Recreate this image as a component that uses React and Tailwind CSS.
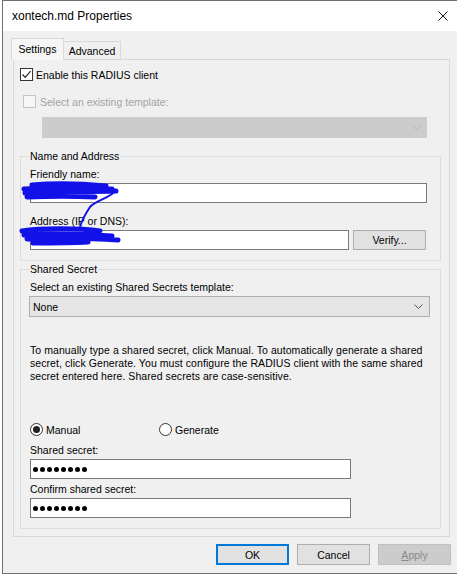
import React from 'react';

const CheckMark = () => (
  <svg width="11" height="11" viewBox="0 0 11 11">
    <path d="M1.5 5.5 L4.2 8.3 L9.6 2.2" fill="none" stroke="#222" strokeWidth="1.2" />
  </svg>
);

const Chevron = ({ color }) => (
  <svg width="9" height="5" viewBox="0 0 9 5">
    <path d="M0.5 0.5 L4.5 4.5 L8.5 0.5" fill="none" stroke={color} strokeWidth="1" />
  </svg>
);

const Radio = ({ checked }) => (
  <span className="w-[13px] h-[13px] rounded-full border border-[#333333] bg-white flex items-center justify-center shrink-0">
    {checked && <span className="w-[7px] h-[7px] rounded-full bg-[#222222]" />}
  </span>
);

const Dots = () => (
  <div className="flex items-center gap-[2px] pl-[2px] h-full">
    {Array.from({ length: 8 }).map((_, i) => (
      <span key={i} className="w-[5px] h-[5px] rounded-full bg-black" />
    ))}
  </div>
);

export default function App() {
  return (
    <div className="relative w-[457px] h-[577px] overflow-hidden bg-white text-black font-['Liberation_Sans',Arial,sans-serif]">
      <div className="ml-[2px] w-[455px] h-[574px] border border-r-0 border-[#707070] flex flex-col">
        {/* Title bar */}
        <div className="h-[30px] shrink-0 bg-white flex items-center justify-between pl-[9px] pr-[9px] text-[12px]">
          <span>xontech.md Properties</span>
          <svg width="10" height="10" viewBox="0 0 10 10">
            <path d="M0.5 0.5 L9.5 9.5 M9.5 0.5 L0.5 9.5" stroke="#111" strokeWidth="1" />
          </svg>
        </div>

        {/* Body */}
        <div className="flex-1 bg-[#f0f0f0] pt-[7px] text-[10.5px] leading-[14px]">
          {/* Tabs */}
          <div className="flex items-end ml-[8px] h-[21px]">
            <div className="relative z-10 -mb-px w-[53px] h-[22px] bg-[#f5f5f5] border border-b-0 border-[#d9d9d9] flex items-center justify-center pb-[1px]">
              Settings
            </div>
            <div className="w-[57px] h-[18px] bg-[#f0f0f0] border border-l-0 border-b-0 border-[#d9d9d9] flex items-center justify-center">
              Advanced
            </div>
          </div>

          {/* Panel */}
          <div className="ml-[10px] w-[437px] h-[478px] border border-[#d9d9d9] bg-[#f0f0f0] flex flex-col">
            <div className="mt-[8px] ml-[6px] flex items-center h-[13px]">
              <span className="w-[13px] h-[13px] border border-[#333333] bg-white flex items-center justify-center">
                <CheckMark />
              </span>
              <span className="ml-[3px]">Enable this RADIUS client</span>
            </div>

            <div className="mt-[14px] ml-[9px] flex items-center h-[13px]">
              <span className="w-[13px] h-[13px] border border-[#c4c4c4] bg-[#f7f7f7]" />
              <span className="ml-[4px] text-[#a3a3a3]">Select an existing template:</span>
            </div>

            <div className="mt-[9px] ml-[28px] w-[385px] h-[21px] bg-[#cccccc] flex items-center justify-end pr-[6px]">
              <Chevron color="#b4b4b4" />
            </div>

            {/* Name and Address */}
            <fieldset className="mt-[11px] ml-[6px] w-[421px] border border-[#dcdcdc] pl-[9px] pt-[4px] pb-[10px]">
              <legend className="px-[1px] -ml-px leading-[14px]">Name and Address</legend>
              <div className="leading-[14px]">Friendly name:</div>
              <div className="mt-[2px] w-[397px] h-[20px] bg-white border border-[#7a7a7a]" />
              <div className="mt-[11px] leading-[14px]">Address (IP or DNS):</div>
              <div className="mt-[2px] flex items-center">
                <div className="w-[319px] h-[20px] bg-white border border-[#7a7a7a]" />
                <button className="ml-[4px] w-[73px] h-[20px] bg-[#e1e1e1] border border-[#adadad] flex items-center justify-center">
                  Verify...
                </button>
              </div>
            </fieldset>

            {/* Shared Secret */}
            <fieldset className="mt-[1px] ml-[6px] w-[421px] border border-[#dcdcdc] pl-[9px] pt-[4px] pb-[10px]">
              <legend className="px-[1px] -ml-px leading-[14px]">Shared Secret</legend>
              <div className="leading-[14px]">Select an existing Shared Secrets template:</div>
              <div className="mt-[2px] -ml-px w-[401px] h-[21px] bg-[#e5e5e5] border border-[#adadad] flex items-center justify-between pl-[3px] pr-[6px]">
                <span>None</span>
                <Chevron color="#555555" />
              </div>
              <p className="mt-[27px] leading-[13px] whitespace-nowrap tracking-[0.07px]">
                To manually type a shared secret, click Manual. To automatically generate a shared
                <br />
                secret, click Generate. You must configure the RADIUS client with the same shared
                <br />
                secret entered here. Shared secrets are case-sensitive.
              </p>
              <div className="mt-[40px] flex items-center h-[13px]">
                <div className="w-[129px] flex items-center">
                  <Radio checked />
                  <span className="ml-[3px]">Manual</span>
                </div>
                <div className="flex items-center">
                  <Radio />
                  <span className="ml-[3px]">Generate</span>
                </div>
              </div>
              <div className="mt-[7px] leading-[14px]">Shared secret:</div>
              <div className="mt-[2px] w-[321px] h-[20px] bg-white border border-[#7a7a7a]">
                <Dots />
              </div>
              <div className="mt-[3px] leading-[14px]">Confirm shared secret:</div>
              <div className="mt-[2px] w-[321px] h-[20px] bg-white border border-[#7a7a7a]">
                <Dots />
              </div>
            </fieldset>
          </div>

          {/* Buttons */}
          <div className="mt-[7px] flex justify-end gap-[8px] pr-[6px]">
            <button className="w-[73px] h-[21px] bg-[#e1e1e1] border-2 border-[#0078d7] flex items-center justify-center">
              OK
            </button>
            <button className="w-[73px] h-[21px] bg-[#e1e1e1] border border-[#adadad] flex items-center justify-center">
              Cancel
            </button>
            <button className="w-[73px] h-[21px] bg-[#cccccc] border border-[#bfbfbf] text-[#8a8a8a] flex items-center justify-center">
              <span><span className="underline">A</span>pply</span>
            </button>
          </div>
        </div>
      </div>

      {/* Redaction marks drawn over the fields */}
      <svg className="absolute left-0 top-0 pointer-events-none" width="457" height="577">
        <g fill="none" stroke="#1212e8" strokeLinecap="round" strokeLinejoin="round">
          <path strokeWidth="5" d="M32 185 C55 183 85 184 106 186 M24 189 C50 187 80 187 112 189 M25 193 C55 191 85 192 116 191 M27 197 C50 196 75 196 95 197" />
          <path strokeWidth="2" d="M116 190 C111 198 96 200 90 207 C86 213 82 220 80 227" />
          <path strokeWidth="5" d="M22 231 C40 228 80 228 100 231 M24 235 C55 233 85 234 112 236 M27 239 C55 238 90 238 118 240 M33 243 C50 243 70 243 88 242" />
        </g>
      </svg>
    </div>
  );
}
